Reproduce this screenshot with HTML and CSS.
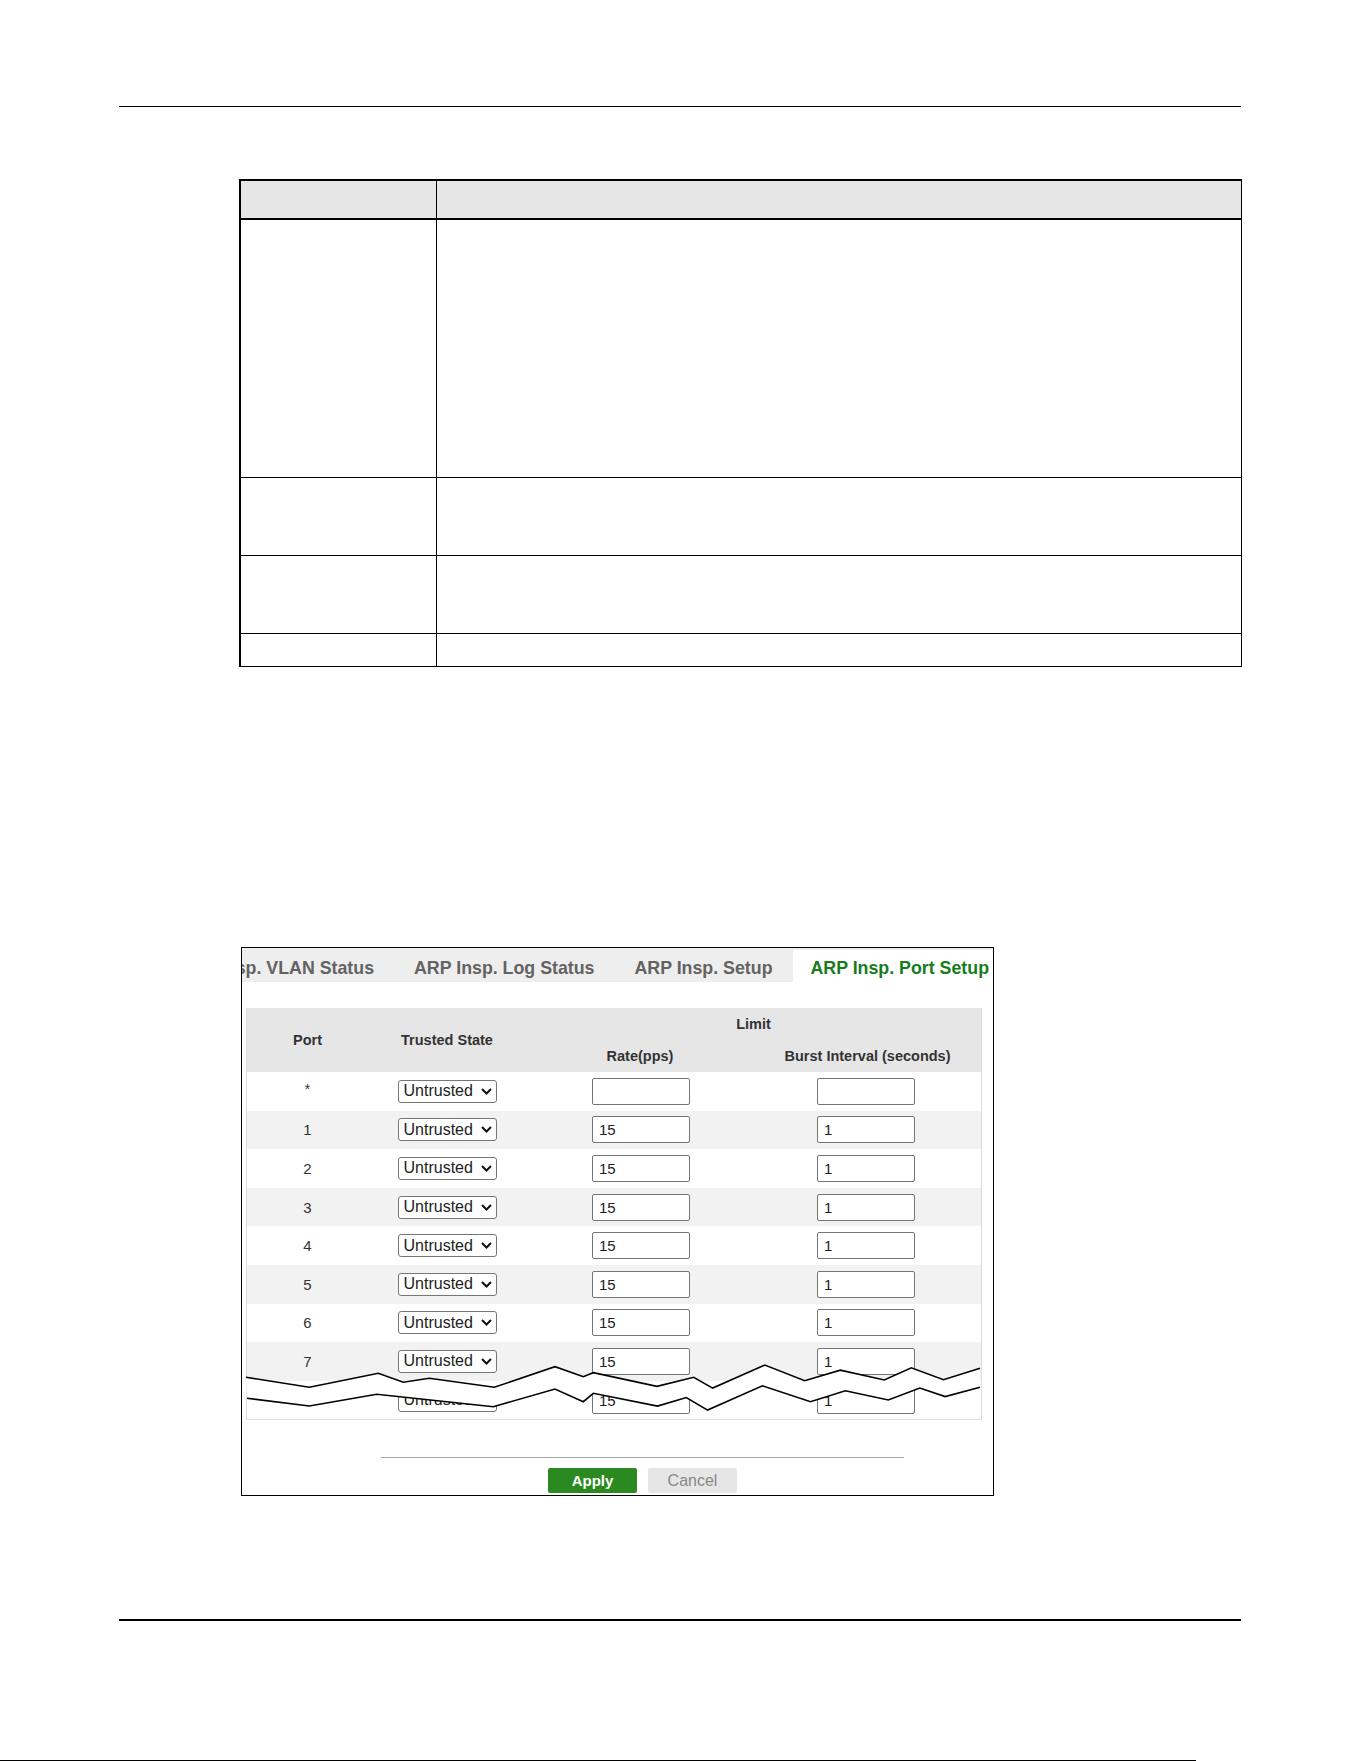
FILE: index.html
```html
<!DOCTYPE html>
<html lang="en">
<head>
<meta charset="utf-8">
<title>ARP Inspection Port Setup</title>
<link rel="stylesheet" href="styles.css">
</head>
<body>
<div class="page">
  <div class="rule rule-top"></div>

  <div class="doc-table">
    <div class="dt-row dt-head"><div class="dt-c1"></div><div class="dt-c2"></div></div>
    <div class="dt-row dt-r1"><div class="dt-c1"></div><div class="dt-c2"></div></div>
    <div class="dt-row dt-r2"><div class="dt-c1"></div><div class="dt-c2"></div></div>
    <div class="dt-row dt-r3"><div class="dt-c1"></div><div class="dt-c2"></div></div>
    <div class="dt-row dt-r4"><div class="dt-c1"></div><div class="dt-c2"></div></div>
  </div>

  <div class="panel">
    <div class="tabs">
      <div class="tab">ARP Insp. VLAN Status</div>
      <div class="tab">ARP Insp. Log Status</div>
      <div class="tab">ARP Insp. Setup</div>
      <div class="tab tab-active">ARP Insp. Port Setup</div>
    </div>

    <div class="ports">
      <div class="ports-head">
        <div class="h-port">Port</div>
        <div class="h-trust">Trusted State</div>
        <div class="h-limit">Limit</div>
        <div class="h-rate">Rate(pps)</div>
        <div class="h-burst">Burst Interval (seconds)</div>
      </div>

      <div class="prow">
        <div class="pnum pstar">*</div>
        <div class="sel"><span>Untrusted</span><svg class="chev" viewBox="0 0 11 7"><polyline points="1,1 5.5,5.5 10,1"/></svg></div>
        <input class="field" type="text" value="">
        <input class="field" type="text" value="">
      </div>
      <div class="prow alt">
        <div class="pnum">1</div>
        <div class="sel"><span>Untrusted</span><svg class="chev" viewBox="0 0 11 7"><polyline points="1,1 5.5,5.5 10,1"/></svg></div>
        <input class="field" type="text" value="15">
        <input class="field" type="text" value="1">
      </div>
      <div class="prow">
        <div class="pnum">2</div>
        <div class="sel"><span>Untrusted</span><svg class="chev" viewBox="0 0 11 7"><polyline points="1,1 5.5,5.5 10,1"/></svg></div>
        <input class="field" type="text" value="15">
        <input class="field" type="text" value="1">
      </div>
      <div class="prow alt">
        <div class="pnum">3</div>
        <div class="sel"><span>Untrusted</span><svg class="chev" viewBox="0 0 11 7"><polyline points="1,1 5.5,5.5 10,1"/></svg></div>
        <input class="field" type="text" value="15">
        <input class="field" type="text" value="1">
      </div>
      <div class="prow">
        <div class="pnum">4</div>
        <div class="sel"><span>Untrusted</span><svg class="chev" viewBox="0 0 11 7"><polyline points="1,1 5.5,5.5 10,1"/></svg></div>
        <input class="field" type="text" value="15">
        <input class="field" type="text" value="1">
      </div>
      <div class="prow alt">
        <div class="pnum">5</div>
        <div class="sel"><span>Untrusted</span><svg class="chev" viewBox="0 0 11 7"><polyline points="1,1 5.5,5.5 10,1"/></svg></div>
        <input class="field" type="text" value="15">
        <input class="field" type="text" value="1">
      </div>
      <div class="prow">
        <div class="pnum">6</div>
        <div class="sel"><span>Untrusted</span><svg class="chev" viewBox="0 0 11 7"><polyline points="1,1 5.5,5.5 10,1"/></svg></div>
        <input class="field" type="text" value="15">
        <input class="field" type="text" value="1">
      </div>
      <div class="prow alt">
        <div class="pnum">7</div>
        <div class="sel"><span>Untrusted</span><svg class="chev" viewBox="0 0 11 7"><polyline points="1,1 5.5,5.5 10,1"/></svg></div>
        <input class="field" type="text" value="15">
        <input class="field" type="text" value="1">
      </div>
      <div class="prow">
        <div class="pnum">8</div>
        <div class="sel"><span>Untrusted</span><svg class="chev" viewBox="0 0 11 7"><polyline points="1,1 5.5,5.5 10,1"/></svg></div>
        <input class="field" type="text" value="15">
        <input class="field" type="text" value="1">
      </div>
    </div>

    <div class="footer">
      <div class="footer-rule"></div>
      <div class="buttons">
        <button class="btn btn-apply" type="button">Apply</button>
        <button class="btn btn-cancel" type="button">Cancel</button>
      </div>
    </div>

    <!-- torn-edge break across the port list: white gap between two jagged lines -->
    <svg class="tear" viewBox="242 948 751 547" width="751" height="547">
      <polygon class="tear-gap" points="246,1377.3 309.3,1387.3 378.3,1373.3 403.3,1382.3 429.3,1378.3 494.3,1387.3 555,1366.7 583.3,1376.7 593.3,1372.7 656.9,1386.4 693.7,1377.3 712.7,1388.1 764.8,1365.1 804.7,1380.7 840.3,1370.2 884.3,1380 911.3,1367.8 943.5,1379.7 980,1368.3 980,1387.3 945.2,1396.6 919.8,1388.1 888.3,1400 845.3,1390.8 810.5,1401.7 762.4,1385.8 707.6,1410.1 686.3,1397.6 657.5,1406.1 593.3,1393.3 583.3,1401.7 555,1389 493.3,1406.7 376.7,1394.3 309.3,1406 247,1398.3"/>
      <polyline class="tear-line" points="246,1377.3 309.3,1387.3 378.3,1373.3 403.3,1382.3 429.3,1378.3 494.3,1387.3 555,1366.7 583.3,1376.7 593.3,1372.7 656.9,1386.4 693.7,1377.3 712.7,1388.1 764.8,1365.1 804.7,1380.7 840.3,1370.2 884.3,1380 911.3,1367.8 943.5,1379.7 980,1368.3"/>
      <polyline class="tear-line" points="247,1398.3 309.3,1406 376.7,1394.3 493.3,1406.7 555,1389 583.3,1401.7 593.3,1393.3 657.5,1406.1 686.3,1397.6 707.6,1410.1 762.4,1385.8 810.5,1401.7 845.3,1390.8 888.3,1400 919.8,1388.1 945.2,1396.6 980,1387.3"/>
    </svg>
  </div>

  <div class="rule rule-bottom"></div>
  <div class="edge"></div>
</div>
</body>
</html>
```

FILE: styles.css
```css
html, body {
  margin: 0;
  padding: 0;
  background: #fff;
}

body {
  font-family: "Liberation Sans", Arial, sans-serif;
  color: #222;
}

.page {
  width: 1361px;
  height: 1761px;
  overflow: hidden;
}

/* page header / footer rules */
.rule {
  margin-left: 119px;
  width: 1122px;
  background: #000;
}

.rule-top {
  margin-top: 106px;
  height: 1px;
}

.rule-bottom {
  margin-top: 123px;
  height: 2px;
}

.edge {
  margin-top: 139px;
  width: 1196px;
  height: 1px;
  background: #000;
}

/* description table (two columns) */
.doc-table {
  margin-top: 72px;
  margin-left: 239px;
  width: 1003px;
  box-sizing: border-box;
  border-top: 2px solid #000;
  border-left: 2px solid #000;
  border-right: 1px solid #000;
  border-bottom: 1px solid #000;
}

.dt-row {
  display: flex;
  box-sizing: border-box;
}

.dt-c1 {
  width: 196px;
  box-sizing: border-box;
  border-right: 1px solid #000;
}

.dt-c2 {
  flex: 1;
}

.dt-head {
  height: 39px;
  background: #e6e6e6;
  border-bottom: 2px solid #000;
}

.dt-r1 {
  height: 258px;
  border-bottom: 1px solid #000;
}

.dt-r2,
.dt-r3 {
  height: 78px;
  border-bottom: 1px solid #000;
}

.dt-r4 {
  height: 32px;
}

/* web configurator panel */
.panel {
  position: relative;
  margin-top: 280px;
  margin-left: 241px;
  width: 753px;
  height: 549px;
  box-sizing: border-box;
  border: 1px solid #000;
  background: #fff;
}

.tabs {
  display: flex;
  justify-content: flex-end;
  height: 34px;
  background: #eeeeee;
  overflow: hidden;
}

.tab {
  flex-shrink: 0;
  padding: 6px 20px 0;
  line-height: 28px;
  font-size: 17.8px;
  font-weight: bold;
  color: #636363;
  white-space: nowrap;
}

.tab-active {
  margin-top: 2px;
  padding: 4px 4px 0 18px;
  background: #fff;
  color: #177d1c;
}

/* port table */
.ports {
  margin: 26px 0 0 4px;
  width: 736px;
  box-sizing: border-box;
  border: 1px solid #dddddd;
  border-top: 0;
}

.ports-head {
  display: grid;
  grid-template-columns: 121px 158px 228px 227px;
  grid-template-rows: 32px 32px;
  background: #e6e6e6;
  font-size: 14.5px;
  font-weight: bold;
  color: #333;
}

.ports-head > div {
  display: flex;
  align-items: center;
  justify-content: center;
}

.h-port {
  grid-column: 1;
  grid-row: 1 / 3;
}

.h-trust {
  grid-column: 2;
  grid-row: 1 / 3;
}

.h-limit {
  grid-column: 3 / 5;
  grid-row: 1;
}

.h-rate {
  grid-column: 3;
  grid-row: 2;
}

.h-burst {
  grid-column: 4;
  grid-row: 2;
}

.prow {
  display: grid;
  grid-template-columns: 121px 158px 230px 225px;
  height: 38.6px;
  align-items: center;
  justify-items: center;
  background: #fff;
}

.prow.alt {
  background: #f2f2f2;
}

.prow .field:last-child {
  margin-left: -5px;
}

.pnum {
  font-size: 15px;
  color: #333;
}

.pstar {
  font-size: 14px;
  margin-top: -4px;
}

.sel {
  display: flex;
  align-items: center;
  width: 99px;
  height: 23px;
  box-sizing: border-box;
  padding: 0 4px 0 5px;
  border: 1px solid #767676;
  border-radius: 3px;
  background: #fff;
  font-size: 16px;
  color: #222;
}

.sel span {
  flex: 1;
  white-space: nowrap;
}

.chev {
  width: 11px;
  height: 7px;
}

.chev polyline {
  fill: none;
  stroke: #111;
  stroke-width: 2;
}

.field {
  width: 98px;
  height: 27px;
  box-sizing: border-box;
  margin: 0;
  padding: 0 6px;
  border: 1px solid #767676;
  border-radius: 2px;
  background: #fff;
  font-family: "Liberation Sans", Arial, sans-serif;
  font-size: 15px;
  color: #222;
  outline: none;
}

/* footer with action buttons */
.footer {
  margin-top: 37px;
}

.footer-rule {
  margin-left: 139px;
  width: 523px;
  height: 1px;
  background: #a6a6a6;
}

.buttons {
  margin-left: 139px;
  width: 523px;
  margin-top: 10px;
  display: flex;
  justify-content: center;
  gap: 11px;
}

.btn {
  width: 89px;
  height: 25px;
  margin: 0;
  padding: 0;
  border: 0;
  border-radius: 2px;
  font-family: "Liberation Sans", Arial, sans-serif;
}

.btn-apply {
  background: #2a8a20;
  color: #fff;
  font-size: 15px;
  font-weight: bold;
}

.btn-cancel {
  background: #e6e6e6;
  color: #888;
  font-size: 16px;
}

/* break overlay */
.tear {
  position: absolute;
  left: 0;
  top: 0;
  pointer-events: none;
}

.tear-gap {
  fill: #fff;
  stroke: none;
}

.tear-line {
  fill: none;
  stroke: #000;
  stroke-width: 1.6;
  stroke-linejoin: miter;
}
```
